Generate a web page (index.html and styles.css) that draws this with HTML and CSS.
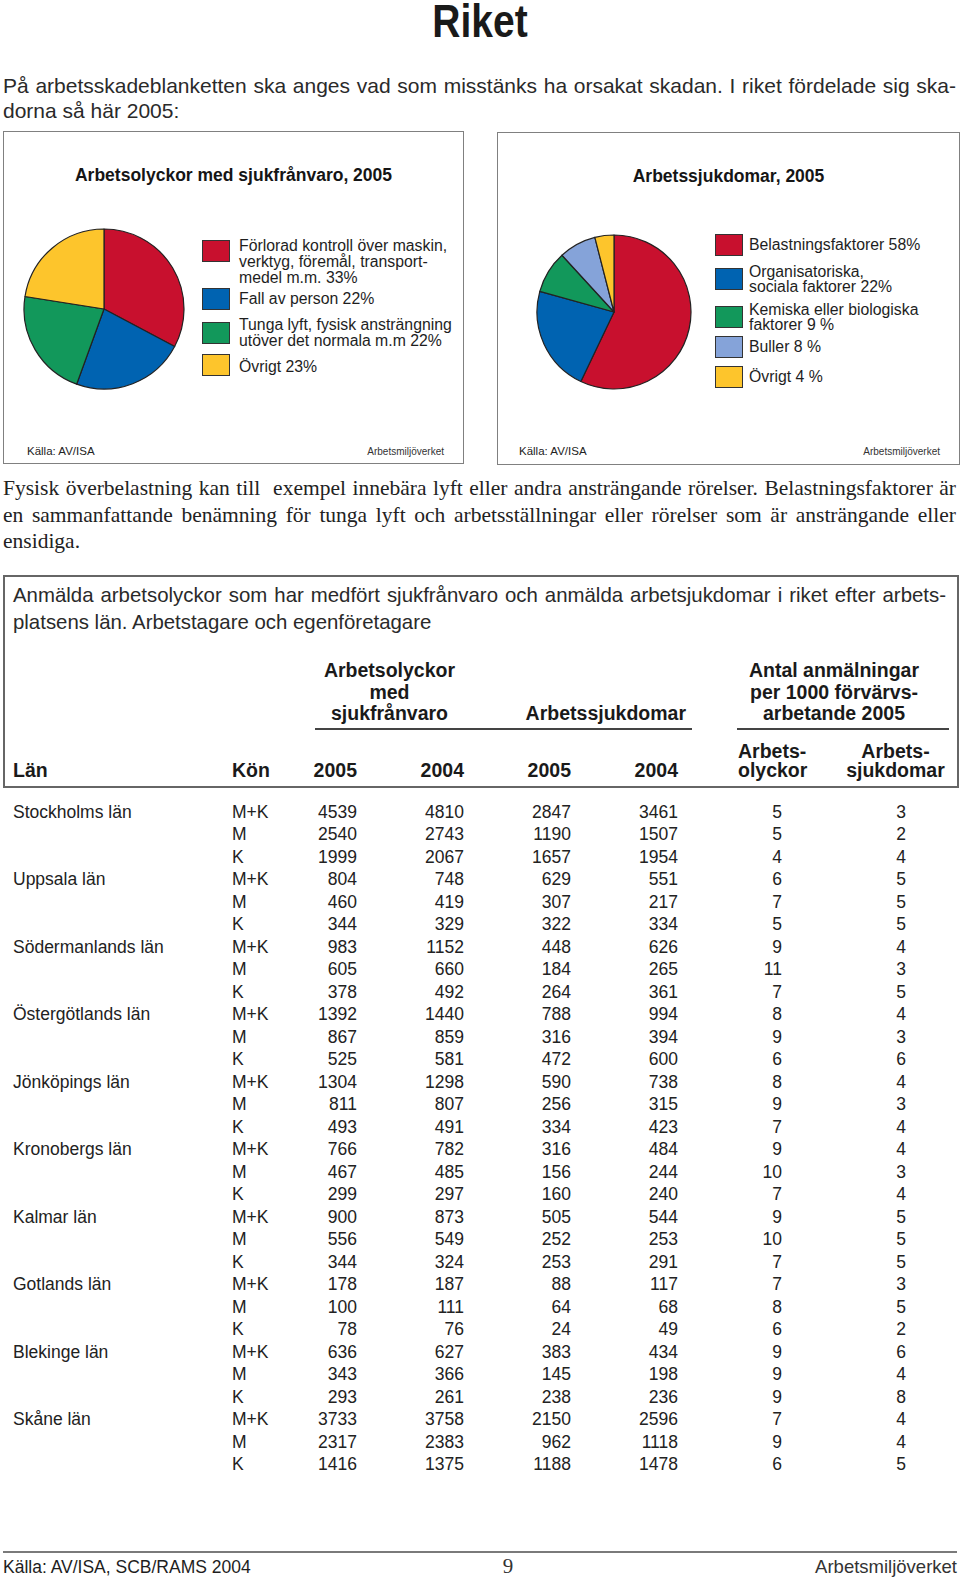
FILE: index.html
```html
<!DOCTYPE html>
<html lang="sv">
<head>
<meta charset="utf-8">
<title>Riket</title>
<link rel="stylesheet" href="styles.css">
</head>
<body>
<h1 class="title">Riket</h1>
<p class="intro">På arbetsskadeblanketten ska anges vad som misstänks ha orsakat skadan. I riket fördelade sig ska&shy;dorna så här 2005:</p>

<div class="charts">
  <section class="chart chart-left">
    <h2 class="chart-title">Arbetsolyckor med sjukfrånvaro, 2005</h2>
    <div class="chart-body body-left">
      <svg class="pie" width="164" height="164" viewBox="-82 -82 164 164">
        <path class="s-red" d="M0,0 L0,-80 A80,80 0 0,1 70.64,37.56 Z"/>
        <path class="s-blue" d="M0,0 L70.64,37.56 A80,80 0 0,1 -27.36,75.18 Z"/>
        <path class="s-green" d="M0,0 L-27.36,75.18 A80,80 0 0,1 -79.01,-12.51 Z"/>
        <path class="s-yellow" d="M0,0 L-79.01,-12.51 A80,80 0 0,1 0,-80 Z"/>
      </svg>
      <ul class="legend legend-left">
        <li class="item item-top"><span class="sw red"></span><span class="lt">Förlorad kontroll över maskin,<br>verktyg, föremål, transport-<br>medel m.m. 33%</span></li>
        <li class="item"><span class="sw blue"></span><span class="lt">Fall av person 22%</span></li>
        <li class="item"><span class="sw green"></span><span class="lt">Tunga lyft, fysisk ansträngning<br>utöver det normala m.m 22%</span></li>
        <li class="item item-low"><span class="sw yellow"></span><span class="lt">Övrigt 23%</span></li>
      </ul>
    </div>
    <div class="chart-foot foot-left"><span class="src">Källa: AV/ISA</span><span class="org">Arbetsmiljöverket</span></div>
  </section>

  <section class="chart chart-right">
    <h2 class="chart-title">Arbetssjukdomar, 2005</h2>
    <div class="chart-body body-right">
      <svg class="pie" width="158" height="158" viewBox="-79 -79 158 158">
        <path class="s-red" d="M0,0 L0,-77 A77,77 0 1,1 -33.15,69.50 Z"/>
        <path class="s-blue" d="M0,0 L-33.15,69.50 A77,77 0 0,1 -74.20,-20.58 Z"/>
        <path class="s-green" d="M0,0 L-74.20,-20.58 A77,77 0 0,1 -52.02,-56.77 Z"/>
        <path class="s-light" d="M0,0 L-52.02,-56.77 A77,77 0 0,1 -19.15,-74.58 Z"/>
        <path class="s-yellow" d="M0,0 L-19.15,-74.58 A77,77 0 0,1 0,-77 Z"/>
      </svg>
      <ul class="legend legend-right">
        <li class="item"><span class="sw red"></span><span class="lt">Belastningsfaktorer 58%</span></li>
        <li class="item"><span class="sw blue"></span><span class="lt">Organisatoriska,<br>sociala faktorer 22%</span></li>
        <li class="item"><span class="sw green"></span><span class="lt">Kemiska eller biologiska<br>faktorer 9 %</span></li>
        <li class="item"><span class="sw light"></span><span class="lt">Buller 8 %</span></li>
        <li class="item"><span class="sw yellow"></span><span class="lt">Övrigt 4 %</span></li>
      </ul>
    </div>
    <div class="chart-foot foot-right"><span class="src">Källa: AV/ISA</span><span class="org">Arbetsmiljöverket</span></div>
  </section>
</div>

<p class="note">Fysisk överbelastning kan till &nbsp;exempel innebära lyft eller andra ansträngande rörelser. Belastningsfaktorer är en sammanfattande benämning för tunga lyft och arbetsställningar eller rörelser som är ansträngande eller ensidiga.</p>

<div class="tbox">
  <p class="caption">Anmälda arbetsolyckor som har medfört sjukfrånvaro och anmälda arbetsjukdomar i riket efter arbets&shy;platsens län. Arbetstagare och egenföretagare</p>
  <div class="grid head-groups">
    <div class="grp grp1">
      <div class="grp-a">Arbetsolyckor<br>med<br>sjukfrånvaro</div>
      <div class="grp-b">Arbetssjukdomar</div>
    </div>
    <div class="grp grp2">Antal anmälningar<br>per 1000 förvärvs-<br>arbetande 2005</div>
  </div>
  <div class="grid head-cols">
    <div>Län</div>
    <div>Kön</div>
    <div class="r">2005</div>
    <div class="r">2004</div>
    <div class="r">2005</div>
    <div class="r">2004</div>
    <div class="hg">Arbets-<br>olyckor</div>
    <div class="hh">Arbets-<br>sjukdomar</div>
  </div>
</div>

<div class="rows">
  <div class="grid row"><div>Stockholms län</div><div>M+K</div><div class="r">4539</div><div class="r">4810</div><div class="r">2847</div><div class="r">3461</div><div class="g">5</div><div class="h">3</div></div>
  <div class="grid row"><div></div><div>M</div><div class="r">2540</div><div class="r">2743</div><div class="r">1190</div><div class="r">1507</div><div class="g">5</div><div class="h">2</div></div>
  <div class="grid row"><div></div><div>K</div><div class="r">1999</div><div class="r">2067</div><div class="r">1657</div><div class="r">1954</div><div class="g">4</div><div class="h">4</div></div>
  <div class="grid row"><div>Uppsala län</div><div>M+K</div><div class="r">804</div><div class="r">748</div><div class="r">629</div><div class="r">551</div><div class="g">6</div><div class="h">5</div></div>
  <div class="grid row"><div></div><div>M</div><div class="r">460</div><div class="r">419</div><div class="r">307</div><div class="r">217</div><div class="g">7</div><div class="h">5</div></div>
  <div class="grid row"><div></div><div>K</div><div class="r">344</div><div class="r">329</div><div class="r">322</div><div class="r">334</div><div class="g">5</div><div class="h">5</div></div>
  <div class="grid row"><div>Södermanlands län</div><div>M+K</div><div class="r">983</div><div class="r">1152</div><div class="r">448</div><div class="r">626</div><div class="g">9</div><div class="h">4</div></div>
  <div class="grid row"><div></div><div>M</div><div class="r">605</div><div class="r">660</div><div class="r">184</div><div class="r">265</div><div class="g">11</div><div class="h">3</div></div>
  <div class="grid row"><div></div><div>K</div><div class="r">378</div><div class="r">492</div><div class="r">264</div><div class="r">361</div><div class="g">7</div><div class="h">5</div></div>
  <div class="grid row"><div>Östergötlands län</div><div>M+K</div><div class="r">1392</div><div class="r">1440</div><div class="r">788</div><div class="r">994</div><div class="g">8</div><div class="h">4</div></div>
  <div class="grid row"><div></div><div>M</div><div class="r">867</div><div class="r">859</div><div class="r">316</div><div class="r">394</div><div class="g">9</div><div class="h">3</div></div>
  <div class="grid row"><div></div><div>K</div><div class="r">525</div><div class="r">581</div><div class="r">472</div><div class="r">600</div><div class="g">6</div><div class="h">6</div></div>
  <div class="grid row"><div>Jönköpings län</div><div>M+K</div><div class="r">1304</div><div class="r">1298</div><div class="r">590</div><div class="r">738</div><div class="g">8</div><div class="h">4</div></div>
  <div class="grid row"><div></div><div>M</div><div class="r">811</div><div class="r">807</div><div class="r">256</div><div class="r">315</div><div class="g">9</div><div class="h">3</div></div>
  <div class="grid row"><div></div><div>K</div><div class="r">493</div><div class="r">491</div><div class="r">334</div><div class="r">423</div><div class="g">7</div><div class="h">4</div></div>
  <div class="grid row"><div>Kronobergs län</div><div>M+K</div><div class="r">766</div><div class="r">782</div><div class="r">316</div><div class="r">484</div><div class="g">9</div><div class="h">4</div></div>
  <div class="grid row"><div></div><div>M</div><div class="r">467</div><div class="r">485</div><div class="r">156</div><div class="r">244</div><div class="g">10</div><div class="h">3</div></div>
  <div class="grid row"><div></div><div>K</div><div class="r">299</div><div class="r">297</div><div class="r">160</div><div class="r">240</div><div class="g">7</div><div class="h">4</div></div>
  <div class="grid row"><div>Kalmar län</div><div>M+K</div><div class="r">900</div><div class="r">873</div><div class="r">505</div><div class="r">544</div><div class="g">9</div><div class="h">5</div></div>
  <div class="grid row"><div></div><div>M</div><div class="r">556</div><div class="r">549</div><div class="r">252</div><div class="r">253</div><div class="g">10</div><div class="h">5</div></div>
  <div class="grid row"><div></div><div>K</div><div class="r">344</div><div class="r">324</div><div class="r">253</div><div class="r">291</div><div class="g">7</div><div class="h">5</div></div>
  <div class="grid row"><div>Gotlands län</div><div>M+K</div><div class="r">178</div><div class="r">187</div><div class="r">88</div><div class="r">117</div><div class="g">7</div><div class="h">3</div></div>
  <div class="grid row"><div></div><div>M</div><div class="r">100</div><div class="r">111</div><div class="r">64</div><div class="r">68</div><div class="g">8</div><div class="h">5</div></div>
  <div class="grid row"><div></div><div>K</div><div class="r">78</div><div class="r">76</div><div class="r">24</div><div class="r">49</div><div class="g">6</div><div class="h">2</div></div>
  <div class="grid row"><div>Blekinge län</div><div>M+K</div><div class="r">636</div><div class="r">627</div><div class="r">383</div><div class="r">434</div><div class="g">9</div><div class="h">6</div></div>
  <div class="grid row"><div></div><div>M</div><div class="r">343</div><div class="r">366</div><div class="r">145</div><div class="r">198</div><div class="g">9</div><div class="h">4</div></div>
  <div class="grid row"><div></div><div>K</div><div class="r">293</div><div class="r">261</div><div class="r">238</div><div class="r">236</div><div class="g">9</div><div class="h">8</div></div>
  <div class="grid row"><div>Skåne län</div><div>M+K</div><div class="r">3733</div><div class="r">3758</div><div class="r">2150</div><div class="r">2596</div><div class="g">7</div><div class="h">4</div></div>
  <div class="grid row"><div></div><div>M</div><div class="r">2317</div><div class="r">2383</div><div class="r">962</div><div class="r">1118</div><div class="g">9</div><div class="h">4</div></div>
  <div class="grid row"><div></div><div>K</div><div class="r">1416</div><div class="r">1375</div><div class="r">1188</div><div class="r">1478</div><div class="g">6</div><div class="h">5</div></div>
</div>

<footer class="page-foot">
  <span class="pf-src">Källa: AV/ISA, SCB/RAMS 2004</span>
  <span class="pf-num">9</span>
  <span class="pf-org">Arbetsmiljöverket</span>
</footer>
</body>
</html>
```

FILE: styles.css
```css
html, body {
  margin: 0;
  padding: 0;
  background: #fff;
}

body {
  width: 960px;
  font-family: "Liberation Sans", Arial, sans-serif;
  color: #222;
}

.title {
  margin: 0;
  font-family: "Liberation Sans", Arial, sans-serif;
  font-weight: bold;
  font-size: 47px;
  line-height: 42px;
  text-align: center;
  color: #1a1a1a;
  transform: scaleX(0.83);
}

.intro {
  margin: 30.6px 4px 0 3px;
  font-size: 21px;
  line-height: 25px;
  text-align: justify;
  color: #2a2a2a;
}

/* ---------- charts ---------- */
.charts {
  display: flex;
  align-items: flex-start;
  gap: 33px;
  padding-left: 3px;
  margin-top: 8.4px;
}

.chart {
  box-sizing: border-box;
  height: 333px;
  border: 1px solid #808080;
  display: flex;
  flex-direction: column;
  padding-top: 33px;
}

.chart-left { width: 461px; }
.chart-right { width: 463px; margin-top: 1px; }

.chart-title {
  margin: 0;
  font-size: 17.5px;
  line-height: 20px;
  font-weight: bold;
  text-align: center;
  color: #151515;
}

.chart-body {
  display: flex;
  align-items: flex-start;
}

.body-left { margin-top: 42px; }
.body-left .pie { margin-left: 18px; }
.body-right { margin-top: 47px; }
.body-right .pie { margin-left: 37px; }

.pie { flex: none; display: block; }
.pie path {
  stroke: #222;
  stroke-width: 1.2;
  stroke-linejoin: round;
}
.s-red { fill: #c8102e; }
.s-blue { fill: #0063b1; }
.s-green { fill: #12985b; }
.s-yellow { fill: #fdc52c; }
.s-light { fill: #85a3d9; }

.legend {
  list-style: none;
  margin: 0;
  padding: 0;
  display: flex;
  flex-direction: column;
  font-size: 15.8px;
  color: #1e1e1e;
}

.item {
  display: flex;
  align-items: center;
}

.sw {
  flex: none;
  box-sizing: border-box;
  width: 28px;
  height: 22px;
  border: 1px solid #333;
}
.sw.red { background: #c8102e; }
.sw.blue { background: #0063b1; }
.sw.green { background: #12985b; }
.sw.yellow { background: #fdc52c; }
.sw.light { background: #85a3d9; }

.legend-left {
  margin-left: 16px;
  margin-top: 11px;
  line-height: 16px;
}
.legend-left .item { gap: 9px; }
.legend-left .item-top { align-items: flex-start; }
.legend-left .item-top .sw { margin-top: 2px; }
.legend-left .item:nth-child(2) { margin-top: 2px; }
.legend-left .item:nth-child(3) { margin-top: 7px; }
.legend-left .item:nth-child(4) { margin-top: 5px; }
.legend-left .item-low .lt { padding-top: 5px; }

.legend-right {
  margin-left: 22px;
  margin-top: 1px;
  line-height: 15px;
}
.legend-right .item { gap: 6px; }
.legend-right .item:nth-child(2) { margin-top: 8px; }
.legend-right .item:nth-child(3) { margin-top: 8px; }
.legend-right .item:nth-child(4) { margin-top: 4px; }
.legend-right .item:nth-child(5) { margin-top: 8px; }

.chart-foot {
  margin-top: auto;
  display: flex;
  justify-content: space-between;
  align-items: baseline;
  line-height: 14px;
  padding-bottom: 4px;
}
.foot-left { padding-left: 23px; padding-right: 19px; }
.foot-right { padding-left: 21px; padding-right: 19px; padding-bottom: 5px; }
.src { font-size: 11.5px; color: #222; }
.org { font-size: 10px; color: #333; }

/* ---------- note ---------- */
.note {
  margin: 10.5px 4px 0 3px;
  font-family: "Liberation Serif", "Times New Roman", serif;
  font-size: 21.5px;
  line-height: 26.5px;
  text-align: justify;
  color: #222;
}

/* ---------- table ---------- */
.tbox {
  margin: 20px 1px 0 3px;
  border: 2px solid #666;
  padding: 0 0 5.5px 8px;
}

.caption {
  margin: 0;
  padding: 5.5px 11px 0 0;
  font-size: 20.4px;
  line-height: 26.5px;
  text-align: justify;
  color: #2a2a2a;
}

.grid {
  display: grid;
  grid-template-columns: 219px 68px 57px 107px 107px 107px 142px 125px;
}

.head-groups {
  margin-top: 24.8px;
  font-weight: bold;
  font-size: 19.5px;
  line-height: 21.5px;
  color: #1a1a1a;
  align-items: end;
}

.grp {
  border-bottom: 2px solid #444;
  padding-bottom: 3.5px;
}

.grp1 {
  grid-column: 3 / 7;
  margin-left: 15px;
  margin-right: -14px;
  display: grid;
  grid-template-columns: 149px 1fr;
  align-items: end;
}
.grp-a { text-align: center; }
.grp-b { text-align: right; padding-right: 6px; }

.grp2 {
  grid-column: 7 / 9;
  margin-left: 59px;
  margin-right: -4px;
  padding-right: 18px;
  text-align: center;
}

.head-cols {
  margin-top: 11.5px;
  font-weight: bold;
  font-size: 19.5px;
  line-height: 19.5px;
  color: #1a1a1a;
  align-items: end;
}

.r { text-align: right; }
.hg { padding-left: 60px; }
.hh { padding-left: 26px; text-align: center; }

.rows {
  padding-left: 13px;
  margin-top: 12.7px;
}

.row {
  font-size: 17.5px;
  line-height: 22.5px;
  color: #222;
}
.row .g { text-align: right; padding-right: 38px; }
.row .h { text-align: right; padding-right: 39px; }

/* ---------- page footer ---------- */
.page-foot {
  margin: 75.3px 3px 0 3px;
  border-top: 2.5px solid #7a7a7a;
  padding-top: 2.5px;
  display: grid;
  grid-template-columns: 490px 30px 1fr;
  align-items: baseline;
  line-height: 20px;
}
.pf-src { font-size: 17.5px; color: #1e1e1e; }
.pf-num {
  font-family: "Liberation Serif", "Times New Roman", serif;
  font-size: 21px;
  text-align: center;
  color: #333;
}
.pf-org { font-size: 18.5px; text-align: right; color: #333; }
```
